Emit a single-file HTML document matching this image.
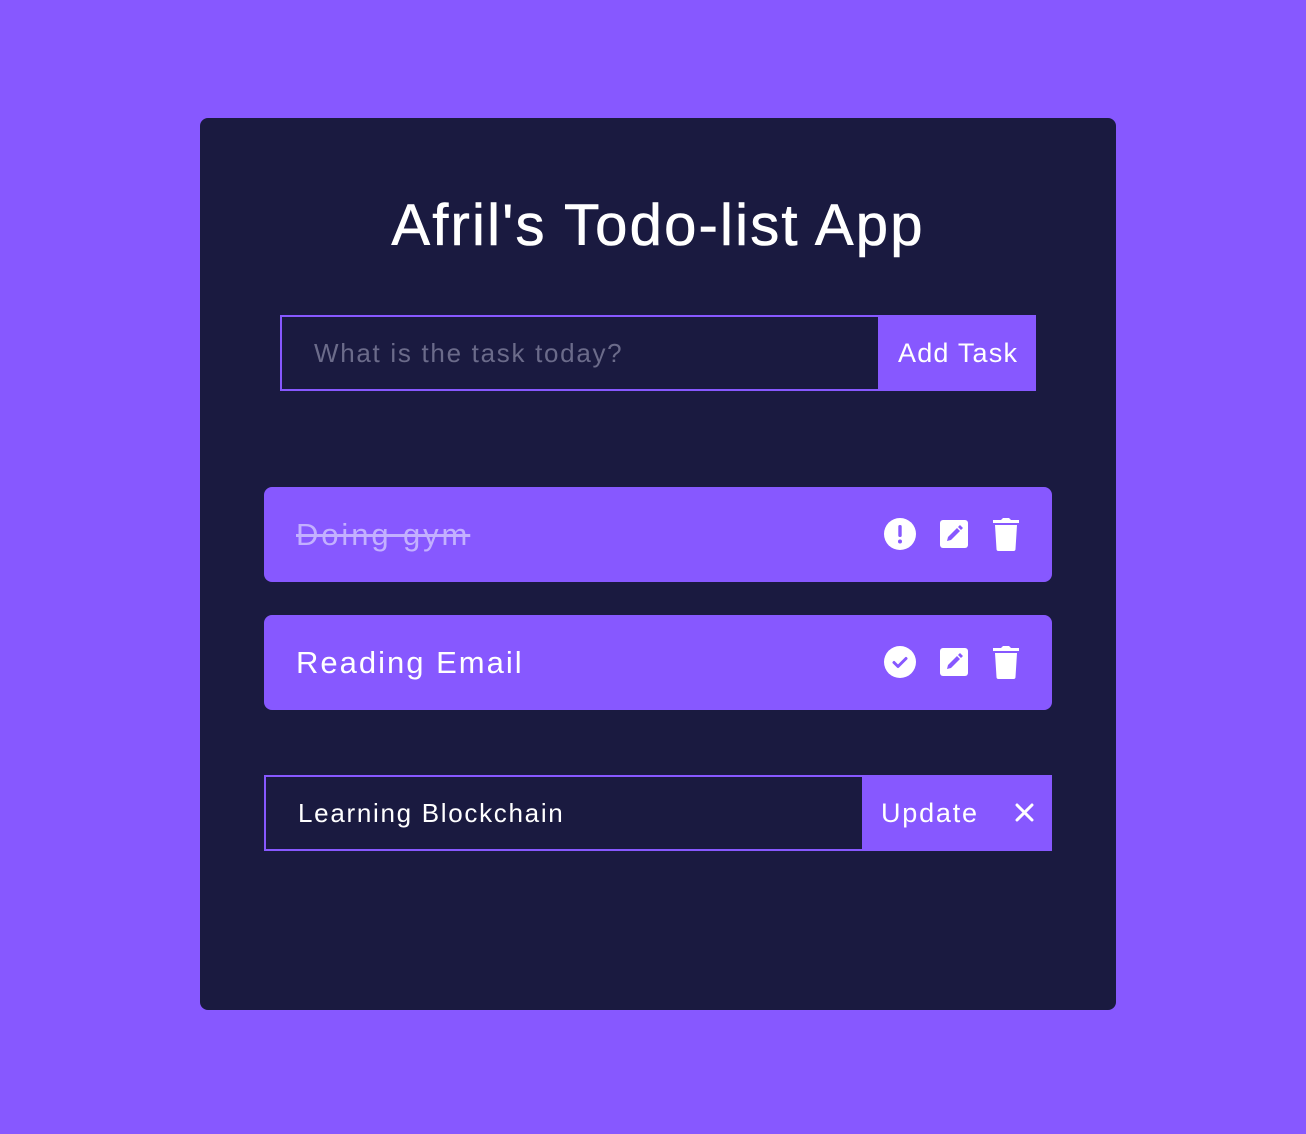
<!DOCTYPE html>
<html><head><meta charset="utf-8"><style>
*{box-sizing:border-box;margin:0;padding:0}
body{width:1306px;height:1134px;background:#8758ff;font-family:"Liberation Sans",sans-serif;position:relative;overflow:hidden}
.card{position:absolute;left:200px;top:118px;width:916px;height:892px;background:#1a1a40;border-radius:8px}
h1{position:absolute;left:0;width:916px;top:74px;text-align:center;color:#fff;font-size:58px;font-weight:normal;letter-spacing:2.2px;-webkit-text-stroke:0.6px #fff}
.in{position:absolute;border:2px solid #8758ff;background:#1a1a40;color:#fff;font-size:26px;display:flex;align-items:center;letter-spacing:1.7px}
.btn{position:absolute;background:#8758ff;color:#fff;font-size:27px;display:flex;align-items:center}
.task{position:absolute;left:64px;width:788px;height:95px;background:#8758ff;border-radius:8px;color:#fff;font-size:31px;display:flex;align-items:center;padding-left:32px;letter-spacing:2px}
.ic{position:absolute;top:31px}
</style></head><body>
<div class="card">
<h1>Afril's Todo-list App</h1>
<div class="in" style="left:80px;top:197px;width:600px;height:76px;padding-left:32px;color:#6b6b8a">What is the task today?</div>
<div class="btn" style="left:678px;top:197px;width:158px;height:76px;padding-left:20px;letter-spacing:1.2px">Add Task</div>

<div class="task" style="top:369px"><span style="color:#c3b0ff;text-decoration:line-through;letter-spacing:2.9px">Doing gym</span>
<svg class="ic" style="left:620px" width="32" height="32" viewBox="0 0 32 32"><circle cx="16" cy="16" r="16" fill="#fff"/><rect x="14.3" y="7" width="3.4" height="12" rx="1.5" fill="#8758ff"/><circle cx="16" cy="23.5" r="2" fill="#8758ff"/></svg>
<svg class="ic" style="left:676px;top:33px" width="28" height="28" viewBox="0 0 28 28"><rect width="28" height="28" rx="3" fill="#fff"/><path d="M7 21l1-4 9-9 3 3-9 9z M18 7l2-2 3 3-2 2z" fill="#8758ff"/></svg>
<svg class="ic" style="left:728px;top:30px" width="28" height="34" viewBox="0 0 28 34"><path d="M1 3h8l2-2h6l2 2h8v3H1z M3 8h22l-1.5 24a2 2 0 0 1-2 2h-15a2 2 0 0 1-2-2z" fill="#fff"/></svg>
</div>

<div class="task" style="top:497px">Reading Email
<svg class="ic" style="left:620px" width="32" height="32" viewBox="0 0 32 32"><circle cx="16" cy="16" r="16" fill="#fff"/><path d="M10 16.5l4 4 8-8" stroke="#8758ff" stroke-width="3" fill="none" stroke-linecap="round" stroke-linejoin="round"/></svg>
<svg class="ic" style="left:676px;top:33px" width="28" height="28" viewBox="0 0 28 28"><rect width="28" height="28" rx="3" fill="#fff"/><path d="M7 21l1-4 9-9 3 3-9 9z M18 7l2-2 3 3-2 2z" fill="#8758ff"/></svg>
<svg class="ic" style="left:728px;top:30px" width="28" height="34" viewBox="0 0 28 34"><path d="M1 3h8l2-2h6l2 2h8v3H1z M3 8h22l-1.5 24a2 2 0 0 1-2 2h-15a2 2 0 0 1-2-2z" fill="#fff"/></svg>
</div>

<div class="in" style="left:64px;top:657px;width:600px;height:76px;padding-left:32px">Learning Blockchain</div>
<div class="btn" style="left:662px;top:657px;width:190px;height:76px;padding-left:19px;letter-spacing:1.8px">Update
<svg style="position:absolute;left:153px;top:28px" width="19" height="19" viewBox="0 0 19 19"><path d="M2 2l15 15M17 2L2 17" stroke="#fff" stroke-width="3" stroke-linecap="round"/></svg></div>
</div>
</body></html>
